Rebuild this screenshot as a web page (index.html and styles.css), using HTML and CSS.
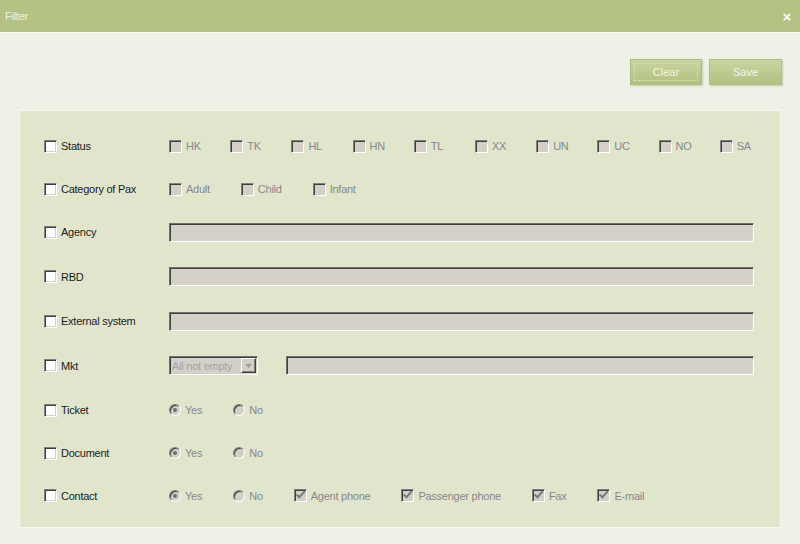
FILE: index.html
```html
<!DOCTYPE html>
<html lang="en">
<head>
    <meta charset="UTF-8">
    <title>Filter</title>
    <link rel="stylesheet" href="styles.css">
</head>
<body>
    <div class="titlebar">
        <span class="title">Filter</span>
        <span class="close">&#215;</span>
    </div>

    <div class="toolbar">
        <button class="btn focused"><span>Clear</span></button>
        <button class="btn"><span>Save</span></button>
    </div>

    <div class="panel">
        <div class="row">
            <label class="lbl"><span class="cb"></span>Status</label>
            <div class="status">
                <span class="opt"><span class="cb dis"></span>HK</span>
                <span class="opt"><span class="cb dis"></span>TK</span>
                <span class="opt"><span class="cb dis"></span>HL</span>
                <span class="opt"><span class="cb dis"></span>HN</span>
                <span class="opt"><span class="cb dis"></span>TL</span>
                <span class="opt"><span class="cb dis"></span>XX</span>
                <span class="opt"><span class="cb dis"></span>UN</span>
                <span class="opt"><span class="cb dis"></span>UC</span>
                <span class="opt"><span class="cb dis"></span>NO</span>
                <span class="opt"><span class="cb dis"></span>SA</span>
            </div>
        </div>

        <div class="row">
            <label class="lbl"><span class="cb"></span>Category of Pax</label>
            <div class="opts">
                <span class="opt"><span class="cb dis"></span>Adult</span>
                <span class="opt"><span class="cb dis"></span>Child</span>
                <span class="opt"><span class="cb dis"></span>Infant</span>
            </div>
        </div>

        <div class="row">
            <label class="lbl"><span class="cb"></span>Agency</label>
            <div class="field"></div>
        </div>

        <div class="row">
            <label class="lbl"><span class="cb"></span>RBD</label>
            <div class="field"></div>
        </div>

        <div class="row">
            <label class="lbl"><span class="cb"></span>External system</label>
            <div class="field"></div>
        </div>

        <div class="row">
            <label class="lbl"><span class="cb"></span>Mkt</label>
            <div class="mkt">
                <div class="select">
                    <span class="select-text">All not empty</span>
                    <span class="select-arrow">
                        <svg width="7" height="4" viewBox="0 0 7 4"><path d="M0 0h7L3.5 4z" fill="#a0a0a0"/></svg>
                    </span>
                </div>
                <div class="field"></div>
            </div>
        </div>

        <div class="row">
            <label class="lbl"><span class="cb"></span>Ticket</label>
            <div class="opts">
                <span class="opt"><span class="rb on"></span>Yes</span>
                <span class="opt"><span class="rb"></span>No</span>
            </div>
        </div>

        <div class="row">
            <label class="lbl"><span class="cb"></span>Document</label>
            <div class="opts">
                <span class="opt"><span class="rb on"></span>Yes</span>
                <span class="opt"><span class="rb"></span>No</span>
            </div>
        </div>

        <div class="row">
            <label class="lbl"><span class="cb"></span>Contact</label>
            <div class="opts">
                <span class="opt"><span class="rb on"></span>Yes</span>
                <span class="opt"><span class="rb"></span>No</span>
                <span class="opt"><span class="cb dis checked"></span>Agent phone</span>
                <span class="opt"><span class="cb dis checked"></span>Passenger phone</span>
                <span class="opt"><span class="cb dis checked"></span>Fax</span>
                <span class="opt"><span class="cb dis checked"></span>E-mail</span>
            </div>
        </div>
    </div>
</body>
</html>
```

FILE: styles.css
```css
body {
    margin: 0;
    background-color: #eef1e6;
    font-family: "Liberation Sans", Arial, sans-serif;
    font-size: 11px;
    letter-spacing: -0.25px;
    color: #1c1c1c;
}

.titlebar {
    height: 32px;
    background-color: #b4c283;
    border-bottom: 1px solid #fafbf5;
    display: flex;
    align-items: center;
    justify-content: space-between;
    padding: 0 9px 0 5px;
}
.title {
    color: #eef2dd;
}
.close {
    color: #ffffff;
    font-size: 15px;
    font-weight: bold;
    line-height: 1;
}

.toolbar {
    display: flex;
    justify-content: flex-end;
    gap: 7px;
    padding: 26px 18px 0 0;
}
.btn {
    width: 73px;
    height: 26px;
    padding: 3px;
    border: 1px solid #b0bd80;
    background: linear-gradient(#c9d4a2, #b3c17f);
    box-shadow: 1px 1px 2px rgba(120, 135, 80, 0.35);
    font-family: "Liberation Sans", Arial, sans-serif;
    font-size: 11px;
    color: #f2f5e6;
}
.btn span {
    display: flex;
    align-items: center;
    justify-content: center;
    height: 100%;
    box-sizing: border-box;
    border: 1px dotted transparent;
}
.btn.focused {
    width: 72px;
}
.btn.focused span {
    border-color: #dfe6c4;
}

.panel {
    margin: 25px 19px 0 19px;
    border: 1px solid #f5f7ee;
    background-color: #e0e5cc;
    padding: 13px 26px 10px 24px;
    display: grid;
    grid-template-columns: minmax(0, 1fr);
    grid-template-rows: 44px 42px 44px 45px 44px 45px 44px 42px 43px;
}

.row {
    display: grid;
    grid-template-columns: 125px minmax(0, 1fr);
    align-items: center;
}

.lbl, .opt {
    display: flex;
    align-items: center;
    gap: 4px;
}

.opts {
    display: flex;
    align-items: center;
    gap: 31px;
}
.status {
    display: grid;
    grid-template-columns: repeat(10, 61.2px);
    align-items: center;
}
.opt {
    color: #87878f;
    white-space: nowrap;
}

.cb {
    flex: none;
    width: 13px;
    height: 13px;
    box-sizing: border-box;
    border: 1px solid;
    border-color: #808080 #ffffff #ffffff #808080;
    box-shadow: inset 1px 1px #404040, inset -1px -1px #d4d0c8;
    background-color: #ffffff;
    position: relative;
}
.cb.dis {
    background-color: #d4d0c8;
}
.cb.checked::after {
    content: "";
    position: absolute;
    left: 2px;
    top: 2px;
    width: 7px;
    height: 3px;
    border-left: 2px solid #7a7a7a;
    border-bottom: 2px solid #7a7a7a;
    transform: rotate(-48deg);
    transform-origin: 3px 3px;
}

.rb {
    flex: none;
    width: 12px;
    height: 12px;
    box-sizing: border-box;
    border-radius: 50%;
    border: 1px solid;
    border-color: #808080 #ffffff #ffffff #808080;
    box-shadow: inset 1px 1px #404040;
    background-color: #d4d0c8;
    display: flex;
    align-items: center;
    justify-content: center;
}
.rb.on::after {
    content: "";
    width: 4px;
    height: 4px;
    border-radius: 50%;
    background-color: #6f6f6f;
}

.field {
    height: 19px;
    box-sizing: border-box;
    border: 1px solid;
    border-color: #707070 #ffffff #ffffff #707070;
    box-shadow: inset 1px 1px #404040, inset -1px -1px #d8d4cc;
    background-color: #d4d0c8;
}

.mkt {
    display: flex;
    align-items: center;
    gap: 28px;
}
.mkt .field {
    flex: 1;
}
.select {
    width: 89px;
    height: 19px;
    box-sizing: border-box;
    border: 1px solid;
    border-color: #707070 #ffffff #ffffff #707070;
    box-shadow: inset 1px 1px #404040;
    background-color: #d4d0c8;
    display: flex;
    align-items: center;
    justify-content: space-between;
    padding: 0 1px 0 2px;
}
.select-text {
    color: #a3a3a3;
    white-space: nowrap;
}
.select-arrow {
    flex: none;
    width: 15px;
    height: 15px;
    box-sizing: border-box;
    border: 1px solid;
    border-color: #ffffff #404040 #404040 #ffffff;
    box-shadow: inset -1px -1px #808080;
    background-color: #d4d0c8;
    display: flex;
    align-items: center;
    justify-content: center;
}
```
